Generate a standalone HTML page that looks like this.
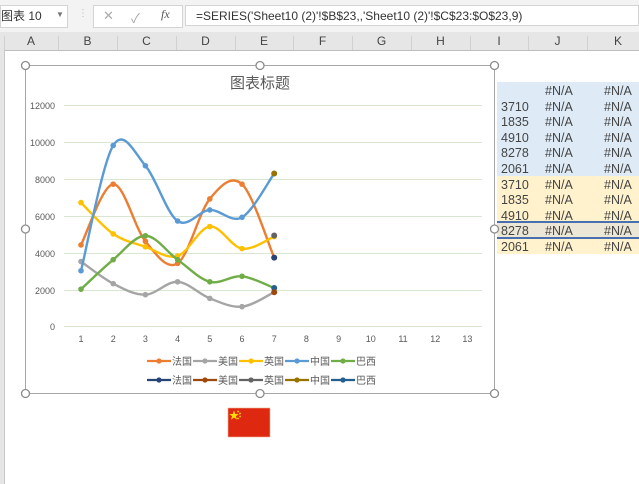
<!DOCTYPE html>
<html><head><meta charset="utf-8">
<style>
body{margin:0;width:639px;height:484px;overflow:hidden;background:#fff;font-family:"Liberation Sans","Noto Sans CJK SC",sans-serif;position:relative}
.abs{position:absolute}
.hdr{position:absolute;top:33px;height:17px;font-size:12px;color:#444;text-align:center;line-height:17px}
.cell{position:absolute;font-size:12.5px;color:#444;line-height:15px}
</style></head><body>
<div class="abs" style="left:0;top:0;width:639px;height:32px;background:#f3f3f3"></div>
<div class="abs" style="left:0;top:5px;width:66px;height:21px;background:#fff;border:1px solid #d4d4d4;font-size:12px;line-height:21px;color:#333">图表 10</div>
<div class="abs" style="left:56px;top:10px;font-size:8px;color:#777">▼</div>
<div class="abs" style="left:78px;top:8px;font-size:10px;color:#bbb">⋮</div>
<div class="abs" style="left:93px;top:5px;width:88px;height:21px;background:#fff;border:1px solid #d4d4d4"></div>
<div class="abs" style="left:103px;top:8px;font-size:13px;color:#aaa">✕</div>
<div class="abs" style="left:131px;top:8px;font-size:13px;color:#aaa">✓</div>
<div class="abs" style="left:161px;top:7px;font-size:12px;color:#555;font-style:italic;font-family:'Liberation Serif',serif">fx</div>
<div class="abs" style="left:185px;top:5px;width:454px;height:21px;background:#fff;border:1px solid #d4d4d4;font-size:12px;line-height:21px;color:#333;padding-left:10px;box-sizing:border-box">=SERIES('Sheet10 (2)'!$B$23,,'Sheet10 (2)'!$C$23:$O$23,9)</div>
<div class="abs" style="left:0;top:32px;width:639px;height:18px;background:#e6e6e6;border-bottom:1px solid #bdbdbd"></div>
<div class="abs" style="left:0;top:50px;width:4px;height:434px;background:#e6e6e6;border-right:1px solid #c8c8c8"></div>
<div class="hdr" style="left:4px;width:54px">A</div>
<div class="hdr" style="left:58px;width:59px">B</div>
<div class="hdr" style="left:117px;width:59px">C</div>
<div class="hdr" style="left:176px;width:59px">D</div>
<div class="hdr" style="left:235px;width:58px">E</div>
<div class="hdr" style="left:293px;width:59px">F</div>
<div class="hdr" style="left:352px;width:59px">G</div>
<div class="hdr" style="left:411px;width:59px">H</div>
<div class="hdr" style="left:470px;width:58px">I</div>
<div class="hdr" style="left:528px;width:59px">J</div>
<div class="hdr" style="left:587px;width:62px">K</div>
<svg class="abs" style="left:0;top:32px" width="639" height="18">
<g stroke="#d0d0d0"><line x1="4.5" y1="4" x2="4.5" y2="18"/><line x1="58.5" y1="4" x2="58.5" y2="18"/><line x1="117.5" y1="4" x2="117.5" y2="18"/><line x1="176.5" y1="4" x2="176.5" y2="18"/><line x1="235.5" y1="4" x2="235.5" y2="18"/><line x1="293.5" y1="4" x2="293.5" y2="18"/><line x1="352.5" y1="4" x2="352.5" y2="18"/><line x1="411.5" y1="4" x2="411.5" y2="18"/><line x1="470.5" y1="4" x2="470.5" y2="18"/><line x1="528.5" y1="4" x2="528.5" y2="18"/><line x1="587.5" y1="4" x2="587.5" y2="18"/></g></svg>
<div class="abs" style="left:497px;top:82px;width:142px;height:94px;background:#deebf7"></div>
<div class="abs" style="left:497px;top:176px;width:142px;height:78px;background:#fff2cc"></div>
<div class="abs" style="left:497px;top:222px;width:142px;height:16px;background:#ece6d6"></div>
<div class="abs" style="left:497px;top:221px;width:142px;height:2px;background:#4a6fb0"></div>
<div class="abs" style="left:497px;top:237px;width:142px;height:2px;background:#4a6fb0"></div>
<div id="tbl"></div>
<svg class="abs" style="left:0;top:0" width="639" height="484" id="ch">
<rect x="25.5" y="65.5" width="469" height="328" fill="#fff" stroke="#a6a6a6"/>
<text x="260" y="88" font-size="15" fill="#595959" text-anchor="middle" font-family="Liberation Sans,Noto Sans CJK SC,sans-serif">图表标题</text>
<g stroke="#d9e6d0" stroke-width="1">
<line x1="64" y1="105.5" x2="482" y2="105.5"/><line x1="64" y1="142.5" x2="482" y2="142.5"/><line x1="64" y1="179.5" x2="482" y2="179.5"/><line x1="64" y1="216.5" x2="482" y2="216.5"/><line x1="64" y1="253.5" x2="482" y2="253.5"/><line x1="64" y1="290.5" x2="482" y2="290.5"/><line x1="64" y1="326.5" x2="482" y2="326.5"/></g>
<g font-size="9" fill="#595959" text-anchor="end" font-family="Liberation Sans,sans-serif">
<text x="55" y="109">12000</text><text x="55" y="146">10000</text><text x="55" y="183">8000</text><text x="55" y="220">6000</text><text x="55" y="257">4000</text><text x="55" y="294">2000</text><text x="55" y="330">0</text></g>
<g font-size="9" fill="#595959" text-anchor="middle" font-family="Liberation Sans,sans-serif" id="xl"></g>
<g id="series"></g>
<g font-size="10" fill="#595959" font-family="Liberation Sans,Noto Sans CJK SC,sans-serif" id="leg"></g>
<g fill="#fff" stroke="#8c8c8c" stroke-width="1.3">
<circle cx="25.5" cy="65.5" r="4"/><circle cx="260" cy="65.5" r="4"/><circle cx="494.5" cy="65.5" r="4"/>
<circle cx="25.5" cy="229" r="4"/><circle cx="494.5" cy="229" r="4"/>
<circle cx="25.5" cy="393.5" r="4"/><circle cx="260" cy="393.5" r="4"/><circle cx="494.5" cy="393.5" r="4"/></g>
<rect x="228" y="408" width="42" height="29" fill="#de2910" stroke="#f0b090" stroke-width="0.6"/>
<polygon points="234,410.5 235.2,414 238.8,414 235.9,416.1 237,419.6 234,417.5 231,419.6 232.1,416.1 229.2,414 232.8,414" fill="#ffde00"/>
<circle cx="238" cy="411.5" r="0.9" fill="#ffde00"/><circle cx="240" cy="413.5" r="0.9" fill="#ffde00"/><circle cx="240" cy="416.5" r="0.9" fill="#ffde00"/><circle cx="238" cy="418.5" r="0.9" fill="#ffde00"/>
</svg>
<script>
var X=function(i){return 81+(i-1)*32.2},Y=function(v){return 326-v*0.01842};
var xl='';for(var i=1;i<=13;i++)xl+='<text x="'+X(i)+'" y="342">'+i+'</text>';
document.getElementById('xl').innerHTML=xl;
var S=[["#ed7d31",[4400,7700,4600,3400,6900,7700,3710]],["#a5a5a5",[3500,2300,1700,2400,1500,1050,1835]],["#ffc000",[6700,5000,4300,3800,5400,4200,4850]],["#5b9bd5",[3000,9800,8700,5700,6300,5900,8278]],["#70ad47",[2000,3600,4900,3600,2400,2700,2061]]];
var h='';
S.forEach(function(s){var p=s[1].map(function(v,i){return [X(i+1),Y(v)]});var d='M'+p[0][0]+','+p[0][1];
for(var i=0;i<p.length-1;i++){var p0=p[i-1]||p[i],p1=p[i],p2=p[i+1],p3=p[i+2]||p2;
d+=' C'+(p1[0]+(p2[0]-p0[0])/6)+','+(p1[1]+(p2[1]-p0[1])/6)+' '+(p2[0]-(p3[0]-p1[0])/6)+','+(p2[1]-(p3[1]-p1[1])/6)+' '+p2[0]+','+p2[1];}
h+='<path d="'+d+'" fill="none" stroke="'+s[0]+'" stroke-width="2.4" stroke-linecap="round"/>';
p.forEach(function(q){h+='<circle cx="'+q[0]+'" cy="'+q[1]+'" r="2.8" fill="'+s[0]+'"/>'});});
[[8278,"#997300"],[4910,"#636363"],[3710,"#264478"],[2061,"#255e91"],[1835,"#9e480e"]].forEach(function(m){h+='<circle cx="'+X(7)+'" cy="'+Y(m[0])+'" r="3" fill="'+m[1]+'"/>'});
document.getElementById('series').innerHTML=h;
var L1=[["#ed7d31","法国"],["#a5a5a5","美国"],["#ffc000","英国"],["#5b9bd5","中国"],["#70ad47","巴西"]];
var L2=[["#264478","法国"],["#9e480e","美国"],["#636363","英国"],["#997300","中国"],["#255e91","巴西"]];
var g='';[[L1,361],[L2,380]].forEach(function(r){r[0].forEach(function(e,i){var x=147+i*46;
g+='<line x1="'+x+'" y1="'+r[1]+'" x2="'+(x+24)+'" y2="'+r[1]+'" stroke="'+e[0]+'" stroke-width="2.2"/><circle cx="'+(x+12)+'" cy="'+r[1]+'" r="2.6" fill="'+e[0]+'"/><text x="'+(x+25)+'" y="'+(r[1]+4)+'">'+e[1]+'</text>';});});
document.getElementById('leg').innerHTML=g;
var nums=["","3710","1835","4910","8278","2061","3710","1835","4910","8278","2061"],t='';
nums.forEach(function(n,i){var y=84+i*15.6;t+='<div class="cell" style="left:501px;top:'+y+'px">'+n+'</div><div class="cell" style="left:545px;top:'+y+'px">#N/A</div><div class="cell" style="left:604px;top:'+y+'px">#N/A</div>';});
document.getElementById('tbl').innerHTML=t;
</script>
</body></html>
